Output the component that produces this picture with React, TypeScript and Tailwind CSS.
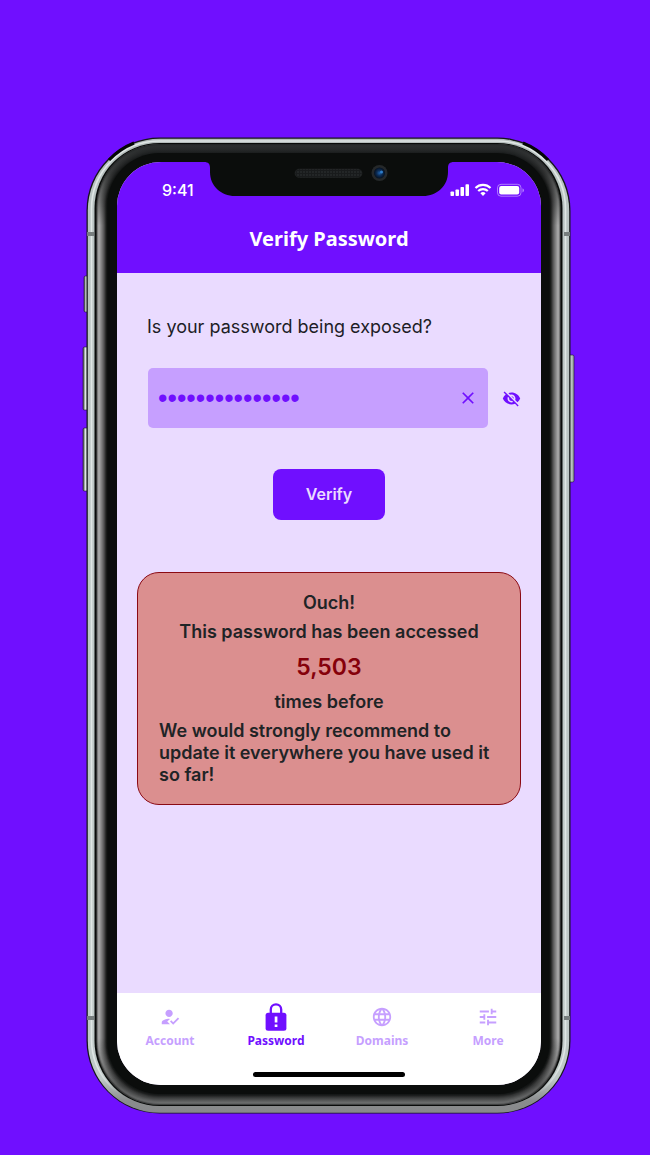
import { useState } from "react";
import { MdClose, MdHowToReg, MdLanguage, MdTune, MdVisibility, MdVisibilityOff } from "react-icons/md";

const rimShades = [
  "#5a5a5a",
  "#9a9a9a",
  "#aaaaaa",
  "#9b9b9b",
  "#8a8a8a",
  "#787878",
  "#666666",
  "#525252",
  "#3a3a3a",
  "#212221",
  "#121413",
];

function PhoneChassis() {
  return (
    <svg
      className="absolute inset-0 h-full w-full"
      viewBox="0 0 493 977"
      preserveAspectRatio="none"
      aria-hidden="true"
    >
      <defs>
        <linearGradient id="steel" x1="0" y1="0" x2="0" y2="1">
          <stop offset="0" stopColor="#b4bcbb" />
          <stop offset="0.05" stopColor="#b9c3c2" />
          <stop offset="0.965" stopColor="#c0cac8" />
          <stop offset="0.988" stopColor="#8a8c8d" />
          <stop offset="1" stopColor="#88898b" />
        </linearGradient>
        <linearGradient id="glint" x1="0" y1="0" x2="0" y2="1">
          <stop offset="0" stopColor="#dfe6e5" />
          <stop offset="0.96" stopColor="#dfe6e5" />
          <stop offset="0.985" stopColor="#dfe6e5" stopOpacity="0" />
        </linearGradient>
        <linearGradient id="ends" x1="0" y1="0" x2="0" y2="1">
          <stop offset="0" stopColor="#1f2223" stopOpacity="0.92" />
          <stop offset="0.03" stopColor="#141616" stopOpacity="0.75" />
          <stop offset="0.085" stopColor="#0b0d0c" stopOpacity="0" />
          <stop offset="0.93" stopColor="#0b0d0c" stopOpacity="0" />
          <stop offset="0.98" stopColor="#141616" stopOpacity="0.55" />
          <stop offset="1" stopColor="#1f2223" stopOpacity="0.45" />
        </linearGradient>
        <linearGradient id="button" x1="0" y1="0" x2="1" y2="0">
          <stop offset="0" stopColor="#3d4443" />
          <stop offset="0.35" stopColor="#dfe6e5" />
          <stop offset="1" stopColor="#8b9795" />
        </linearGradient>
      </defs>
      <g fill="url(#button)" stroke="#1c1c22" strokeWidth="0.6">
        <rect x="2" y="139" width="6" height="36" rx="1.5" />
        <rect x="1" y="210" width="7" height="63" rx="1.5" />
        <rect x="1" y="291" width="7" height="63" rx="1.5" />
        <rect x="485" y="218" width="7" height="127" rx="1.5" />
      </g>
      <rect x="4.5" y="0.5" width="484" height="976" rx="73" fill="#15171a" />
      <rect x="5.8" y="1.8" width="481.4" height="974" rx="72" fill="url(#steel)" />
      <rect x="9.5" y="4" width="474" height="966" rx="68" fill="none" stroke="url(#glint)" strokeWidth="1.6" />
      <g fill="none" stroke="#050606" strokeWidth="3">
        <path d="M27 23A70 70 0 0 1 52 6" />
        <path d="M441 6A70 70 0 0 1 466 23" />
      </g>
      <rect x="12.5" y="6" width="468" height="963" rx="65" fill="#090b0a" />
      {rimShades.map((shade, i) => (
        <rect
          key={shade}
          x={14.5 + i}
          y={7 + i * 0.9}
          width={464 - i * 2}
          height={961 - i * 1.9}
          rx={63 - i}
          fill={shade}
        />
      ))}
      <rect x="14.5" y="7" width="464" height="961" rx="63" fill="url(#ends)" />
      <rect x="25.5" y="16" width="442" height="941" rx="52" fill="#0b0d0c" />
      <g fill="#777e7e">
        <rect x="5" y="95" width="7" height="4" />
        <rect x="482" y="95" width="6" height="4" />
        <rect x="5" y="879" width="7" height="4" />
        <rect x="482" y="879" width="6" height="4" />
      </g>
    </svg>
  );
}

function Notch() {
  return (
    <svg
      className="absolute top-0 left-1/2 -translate-x-1/2"
      width="250"
      height="34"
      viewBox="0 0 250 34"
      aria-hidden="true"
    >
      <defs>
        <pattern id="mesh" width="3" height="3" patternUnits="userSpaceOnUse">
          <rect width="3" height="3" fill="#191b1c" />
          <circle cx="1" cy="1" r="0.8" fill="#303334" />
        </pattern>
        <radialGradient id="lens">
          <stop offset="0" stopColor="#1d5fa8" />
          <stop offset="0.5" stopColor="#0c2c55" />
          <stop offset="1" stopColor="#05101f" />
        </radialGradient>
      </defs>
      <path d="M0 0c4.500 0 6 2 6 6v4c0 14 11 24 25 24h188c14 0 25-10 25-24V6c0-4 1.500-6 6-6z" fill="#0b0d0c" />
      <rect x="91" y="7" width="67" height="8.500" rx="4.250" fill="url(#mesh)" stroke="#242627" strokeWidth="0.500" />
      <circle cx="175.500" cy="11" r="8" fill="#25282a" />
      <circle cx="175.500" cy="11" r="5.500" fill="url(#lens)" />
      <circle cx="177.500" cy="10" r="1.500" fill="#2f7ecb" />
    </svg>
  );
}

function StatusIcons() {
  return (
    <svg width="75" height="14" viewBox="0 0 75 14" fill="#fff" role="img" aria-label="Signal, Wi-Fi and battery">
      <rect x="0.500" y="8.500" width="3.500" height="4.500" rx="0.800" />
      <rect x="5.500" y="6.500" width="3.500" height="6.500" rx="0.800" />
      <rect x="10.500" y="4" width="3.500" height="9" rx="0.800" />
      <rect x="15.500" y="1.300" width="3.500" height="11.700" rx="0.800" />
      <g fill="none" stroke="#fff" strokeWidth="2.200">
        <path d="M25.500 5a10.800 10.800 0 0 1 15 0" />
        <path d="M28.200 8a7 7 0 0 1 9.600 0" />
      </g>
      <path d="M33 13l-2.600-2.700a3.700 3.700 0 0 1 5.200 0z" />
      <rect x="47.500" y="1.300" width="23.500" height="11.900" rx="3.500" fill="none" stroke="#fff" strokeOpacity="0.450" />
      <rect x="49.200" y="3" width="20" height="8.500" rx="2" />
      <path d="M72.500 5.200c2 .8 2 3.400 0 4.200z" fillOpacity="0.500" />
    </svg>
  );
}

function LockAlert() {
  return (
    <svg width="22" height="28" viewBox="0 0 22 28" aria-hidden="true">
      <path d="M5.800 11V6.500a5.200 5.200 0 0 1 10.400 0V11" fill="none" stroke="currentColor" strokeWidth="2.300" />
      <rect x="0.600" y="9.700" width="20.800" height="18" rx="2.500" fill="currentColor" />
      <path d="M9.700 13.500h2.700v6H9.700zM9.700 21.500h2.700V24H9.700z" fill="#fff" />
    </svg>
  );
}

const tabs = [
  { label: "Account", icon: <MdHowToReg size={22} />, active: false },
  { label: "Password", icon: <LockAlert />, active: true },
  { label: "Domains", icon: <MdLanguage size={22} />, active: false },
  { label: "More", icon: <MdTune size={22} />, active: false },
];

export default function App() {
  const [password, setPassword] = useState("correcthorse123");
  const [visible, setVisible] = useState(false);

  return (
    <main className="flex min-h-screen justify-center bg-[#700fff] pt-[137px] pr-[75px] pb-[41px] pl-[82px] font-['Inter',sans-serif]">
      <div className="relative flex w-full max-w-[493px] pt-[25px] pr-[34px] pb-[29px] pl-[35px]">
        <PhoneChassis />

        <div className="relative flex w-full flex-col overflow-hidden rounded-[44px] bg-[#eadbff]">
          <header className="bg-[#700fff] text-white">
            <div className="relative flex items-center justify-between pt-4 pr-4 pl-[45px]">
              <Notch />
              <span className="text-base leading-6 font-medium">9:41</span>
              <StatusIcons />
            </div>
            <h1 className="pt-[23px] pb-5 text-center font-['Noto_Sans',sans-serif] text-xl leading-7 font-bold">
              Verify Password
            </h1>
          </header>

          <section className="flex flex-1 flex-col px-5 pt-10">
            <form className="flex flex-col" onSubmit={(e) => e.preventDefault()}>
              <label htmlFor="password" className="pl-[10px] text-lg leading-7 text-[#1d1d26]">
                Is your password being exposed?
              </label>
              <div className="mt-[27px] flex items-center gap-[14px] pl-[11px]">
                <div className="flex h-[60px] min-w-0 flex-1 items-center rounded-[5px] bg-[#c69fff] pr-[10px] pl-[10px] text-[#700fff]">
                  <input
                    id="password"
                    type={visible ? "text" : "password"}
                    value={password}
                    onChange={(e) => setPassword(e.target.value)}
                    className="min-w-0 flex-1 bg-transparent font-['Liberation_Sans',sans-serif] text-[27px] leading-8 outline-none"
                  />
                  <button type="button" aria-label="Clear password" onClick={() => setPassword("")}>
                    <MdClose size={20} />
                  </button>
                </div>
                <button
                  type="button"
                  aria-label="Show or hide password"
                  className="text-[#700fff]"
                  onClick={() => setVisible(!visible)}
                >
                  {visible ? <MdVisibility size={19} /> : <MdVisibilityOff size={19} />}
                </button>
              </div>
              <button
                type="submit"
                className="mt-[41px] self-center rounded-lg bg-[#700fff] px-[33px] py-3 text-base leading-[27px] font-semibold text-[#eadbff]"
              >
                Verify
              </button>
            </form>

            <div className="mt-[52px] flex flex-col items-center gap-[7px] rounded-[22px] border border-[#8b0a14] bg-[#db8f8f] px-[21px] pt-[19px] pb-[18px] text-lg leading-[22px] font-semibold text-[#1f2426]">
              <p>Ouch!</p>
              <p>This password has been accessed</p>
              <p className="text-[23px] leading-[34px] text-[#85000a]">5,503</p>
              <p>times before</p>
              <p className="self-stretch">We would strongly recommend to update it everywhere you have used it so far!</p>
            </div>
          </section>

          <nav className="relative flex bg-white pt-2 pb-9">
            {tabs.map((tab) => (
              <a
                key={tab.label}
                href={"#" + tab.label.toLowerCase()}
                className={
                  "flex flex-1 flex-col items-center font-['Noto_Sans',sans-serif] text-xs leading-4 font-bold " +
                  (tab.active ? "text-[#700fff]" : "text-[#c69fff]")
                }
              >
                <span className="flex h-8 items-center">{tab.icon}</span>
                {tab.label}
              </a>
            ))}
            <span className="absolute bottom-2 left-1/2 h-[5px] w-[152px] -translate-x-1/2 rounded-full bg-black" />
          </nav>
        </div>
      </div>
    </main>
  );
}
